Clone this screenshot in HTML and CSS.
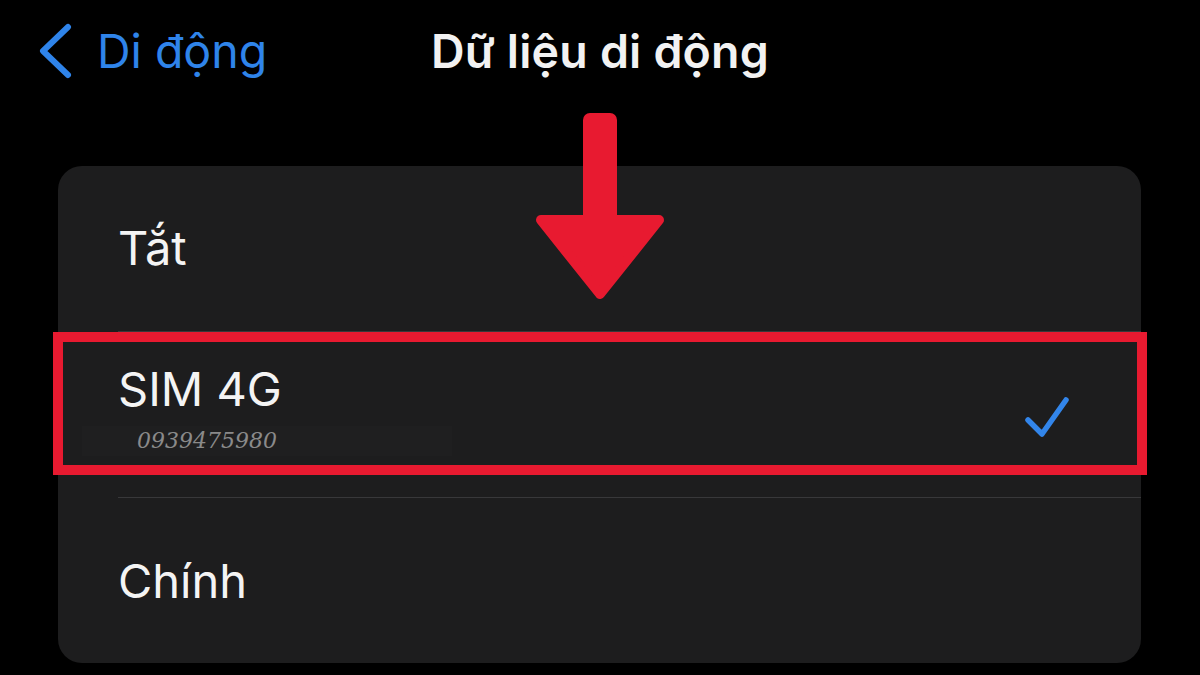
FILE: index.html
```html
<!DOCTYPE html>
<html lang="vi">
<head>
<meta charset="utf-8">
<title>Dữ liệu di động</title>
<link rel="stylesheet" href="styles.css">
</head>
<body>
<div class="screen">
  <header class="nav">
    <div class="back">
      <svg class="chev" width="34" height="56" viewBox="0 0 34 56"><path d="M30 4 L5 28 L30 52" fill="none" stroke="#2f84ea" stroke-width="6" stroke-linecap="round" stroke-linejoin="round"/></svg>
      <span class="back-label">Di động</span>
    </div>
    <h1 class="title">Dữ liệu di động</h1>
    <div></div>
  </header>

  <section class="card">
    <div class="row">
      <span class="label">Tắt</span>
    </div>
    <div class="sep"></div>
    <div class="row row-sim">
      <div class="sim-text">
        <span class="label">SIM 4G</span>
        <span class="number">0939475980</span>
      </div>
      <svg class="check" width="48" height="46" viewBox="0 0 48 46"><path d="M5 25 L19 39 L43 5" fill="none" stroke="#3285ea" stroke-width="5.5" stroke-linecap="round" stroke-linejoin="round"/></svg>
    </div>
    <div class="sep"></div>
    <div class="row">
      <span class="label">Chính</span>
    </div>
  </section>

  <div class="highlight"></div>
  <svg class="arrow" width="140" height="200" viewBox="0 0 140 200">
    <rect x="53" y="5" width="34" height="112" rx="7" fill="#e81a30"/>
    <polygon points="11,112 129,112 70,186" fill="#e81a30" stroke="#e81a30" stroke-width="10" stroke-linejoin="round"/>
  </svg>
</div>
</body>
</html>
```

FILE: styles.css
```css
* { box-sizing: border-box; }
html, body { margin: 0; padding: 0; background: #000; }
body { font-family: "Inter", "Roboto", "Liberation Sans", sans-serif; }

.screen {
  position: relative;
  width: 1200px;
  height: 675px;
  overflow: hidden;
  background: #000;
}

.nav {
  height: 110px;
  display: grid;
  grid-template-columns: 1fr auto 1fr;
  align-items: start;
  padding-top: 22px;
}

.back {
  display: flex;
  align-items: center;
  padding-left: 38px;
  gap: 25px;
}
.chev { display: block; }
.back-label {
  color: #2f84ea;
  font-size: 46.5px;
  line-height: 58px;
}

.title {
  margin: 0;
  color: #f2f2f2;
  font-size: 46.5px;
  font-weight: 600;
  line-height: 58px;
  letter-spacing: 0.2px;
}

.card {
  margin: 56px 59px 0 58px;
  background: #1d1d1e;
  border-radius: 24px;
  height: 497px;
  display: flex;
  flex-direction: column;
}

.row {
  height: 165px;
  display: flex;
  align-items: center;
  padding-left: 60px;
}
.row-sim {
  height: 166px;
  justify-content: space-between;
  padding-right: 70px;
}

.label {
  color: #f4f4f4;
  font-size: 47px;
  line-height: 56px;
}

.sim-text {
  align-self: flex-start;
  display: flex;
  flex-direction: column;
  padding-top: 29px;
}
.number {
  font-family: "DejaVu Serif", "Liberation Serif", serif;
  font-style: italic;
  color: #8a8a8a;
  font-size: 22px;
  line-height: 30px;
  margin-top: 9px;
  width: 370px;
  background: #1f1f20;
  margin-left: -36px;
  padding-left: 55px;
}

.check { display: block; margin-top: 6px; }

.sep {
  height: 1px;
  background: #38383a;
  margin-left: 60px;
}

.highlight {
  position: absolute;
  left: 53px;
  top: 332px;
  width: 1094px;
  height: 143px;
  border: 10px solid #e81a30;
}

.arrow {
  position: absolute;
  left: 530px;
  top: 108px;
}
```
